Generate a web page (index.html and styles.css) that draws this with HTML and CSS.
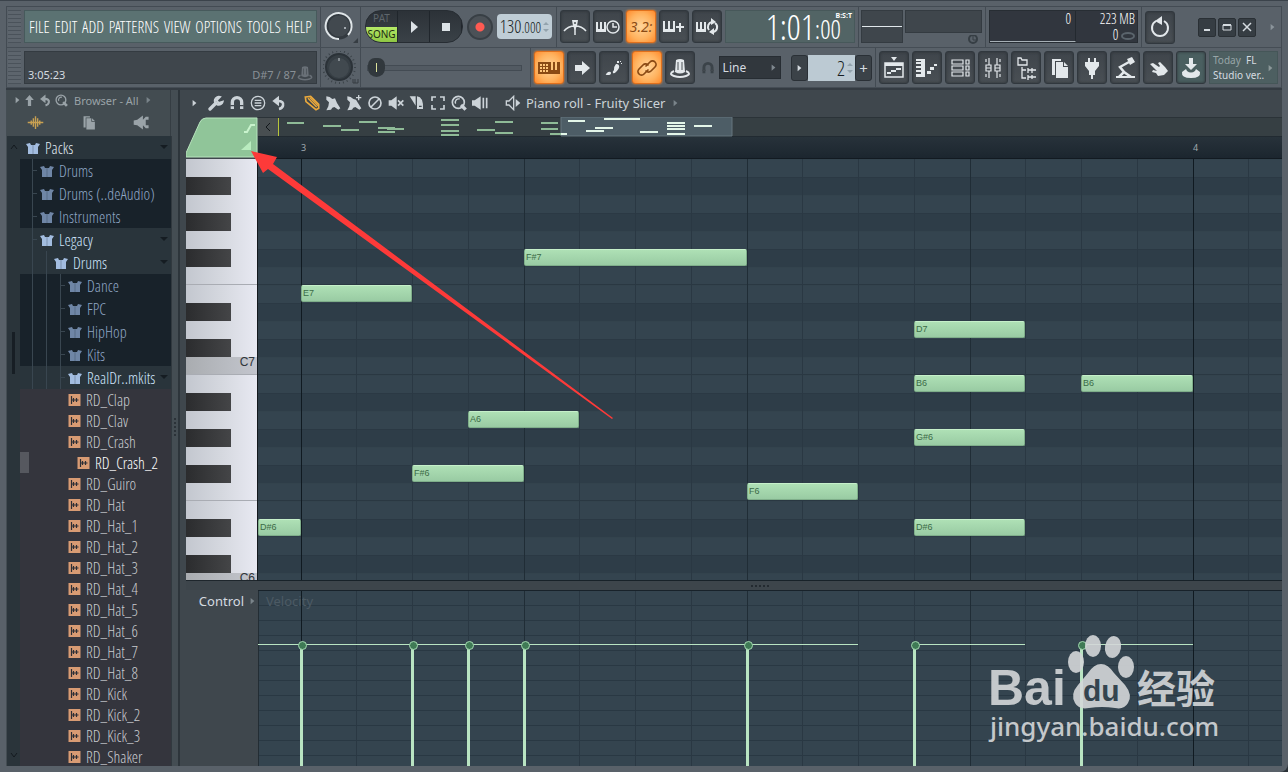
FILE: index.html
```html
<!DOCTYPE html>
<html lang="en">
<head>
  <meta charset="UTF-8" />
  <title>Piano roll - Fruity Slicer</title>
  <link rel="stylesheet" href="styles.css">
</head>
<body>

<!-- Icons -->
<svg class="sprite" aria-hidden="true">
  <symbol id="i-right" viewBox="0 0 8 10"><path d="M1 0l6 5-6 5z" fill="currentColor"/></symbol>
  <symbol id="i-play" viewBox="0 0 24 24"><path d="M9 6l7 6-7 6z" fill="currentColor"/></symbol>
  <symbol id="i-stop" viewBox="0 0 24 24"><path d="M8 8h8v8H8z" fill="currentColor"/></symbol>
  <symbol id="i-metro" viewBox="0 0 24 24"><path d="M1 16q4-5 11-5t11 5M12 10v10" fill="none" stroke="currentColor" stroke-width="1.500"/><path d="M9 5h6l-1 6-2 4-2-4z" fill="currentColor"/><circle cx="12" cy="8" r="1" fill="#4a5055"/></symbol>
  <symbol id="i-wait" viewBox="0 0 24 24"><path d="M0 7h2v7h2V7h2v7h2V7h2v10H0z" fill="currentColor"/><circle cx="17" cy="12" r="6" fill="none" stroke="currentColor" stroke-width="1.500"/><path d="M17 8v4h4" fill="none" stroke="currentColor" stroke-width="1.500"/></symbol>
  <symbol id="i-keysplus" viewBox="0 0 24 24"><path d="M1 6h2v8h3V6h2v8h3V6h2v11H1zM17 8h2v3h3v2h-3v4h-2v-4h-3v-2h3z" fill="currentColor"/></symbol>
  <symbol id="i-keysloop" viewBox="0 0 24 24"><path d="M1 7h2v7h2V7h2v7h2V7h2v10H1z" fill="currentColor"/><path d="M14 15a5 5 0 0 1 3-8M20 8a5 5 0 0 1-2 9" fill="none" stroke="currentColor" stroke-width="2"/><path d="M16 3l5 4-5 3zM19 20l-5-3 5-4z" fill="currentColor"/></symbol>
  <symbol id="i-gridkeys" viewBox="0 0 24 24"><path d="M1 6h22v12H1z" fill="currentColor"/><path d="M3 8h2v2H3zM6 8h2v2H6zM9 8h2v2H9zM3 11h2v2H3zM6 11h2v2H6zM9 11h2v2H9zM3 14h2v2H3zM6 14h2v2H6zM9 14h2v2H9zM14 6h2v8h-2zM18 6h2v8h-2z" fill="#ffc67a"/></symbol>
  <symbol id="i-arrow" viewBox="0 0 24 24"><path d="M5 9h7V5l8 7-8 7v-4H5z" fill="currentColor"/></symbol>
  <symbol id="i-foot" viewBox="0 0 24 24"><path d="M14 8q4 0 3 4-1 2-3 4-2 2-3 1-1-1 1-3 0-4 2-6zM6 16q3-1 3 1t-3 2q-3 0-2-1zM15 5h2v2h-2zM18 5h1v1h-1zM19 7h1v1h-1z" fill="currentColor"/></symbol>
  <symbol id="i-link" viewBox="0 0 24 24"><g fill="none" stroke="currentColor" stroke-width="1.700" stroke-linecap="round"><path d="M11 10l4-4a3.500 3.500 0 0 1 5 5l-4 4a3.500 3.500 0 0 1-5 0"/><path d="M13 14l-4 4a3.500 3.500 0 0 1-5-5l4-4a3.500 3.500 0 0 1 5 0"/></g></symbol>
  <symbol id="i-hat" viewBox="0 0 24 24"><path d="M8 4q4-2 8 0l1 12q-5 3-10 0z" fill="currentColor"/><path d="M10 6v8M14 6v8" stroke="#4a5055" stroke-width="1"/><path d="M6 15q-6 3 0 5 6 2 12 0 6-2 0-5" fill="none" stroke="currentColor" stroke-width="2"/></symbol>
  <symbol id="i-magnet" viewBox="0 0 24 24"><path d="M5 21V11a7 7 0 0 1 14 0v10" fill="none" stroke="currentColor" stroke-width="5"/><path d="M2 16h6M16 16h6" stroke="#42494f" stroke-width="2"/></symbol>
  <symbol id="i-playlist" viewBox="0 0 24 24"><path d="M9 1h6l-3 4z" fill="currentColor"/><path d="M3 7h18v14H3z" fill="none" stroke="currentColor" stroke-width="1.500"/><path d="M3 7h18v3H3zM5 16h4v2H5zM9 14h5v2H9zM14 12h5v2h-5z" fill="currentColor"/></symbol>
  <symbol id="i-roll" viewBox="0 0 24 24"><path d="M1 3h9v18H1v-3h5v-2H1v-2h5v-2H1v-2h5V8H1V6h5V5H1zM12 15h4v3h-4zM15 11h4v3h-4zM19 8h3v2h-3z" fill="currentColor"/></symbol>
  <symbol id="i-rack" viewBox="0 0 24 24"><path d="M4 4h11v4H4zM4 10h11v4H4zM4 16h11v4H4zM18 4h3v4h-3zM18 10h3v4h-3zM18 16h3v4h-3z" fill="none" stroke="currentColor" stroke-width="1.200"/></symbol>
  <symbol id="i-mixer" viewBox="0 0 24 24"><path d="M8 2v7M8 15v7M16 2v7M16 15v7M5 9h5v6H5zM14 9h5v6h-5zM5 12h5M14 12h5M5 3v3M19 3v3M5 18v3M19 18v3" fill="none" stroke="currentColor" stroke-width="1.200"/></symbol>
  <symbol id="i-browser" viewBox="0 0 24 24"><path d="M4 2h3l1 2h5v5H4zM8 11v11h4M8 14h4M14 12v5M14 19v5M14 14h8M14 21h8M18 12v5M18 19v4" fill="none" stroke="currentColor" stroke-width="1.300"/></symbol>
  <symbol id="i-copy" viewBox="0 0 24 24"><path d="M5 3h9v2H8v14H5zM9 6h7v5h5v11H9zM17 6l4 4h-4z" fill="currentColor"/></symbol>
  <symbol id="i-plug" viewBox="0 0 24 24"><path d="M8 2h2v4h4V2h2v4h3v4l-4 5v4h-2v4h-2v-4H9v-4l-4-5V6h3z" fill="currentColor"/></symbol>
  <symbol id="i-lamp" viewBox="0 0 24 24"><path d="M14 3l5-2 3 5-5 3zM3 20h19v2H3z" fill="currentColor"/><path d="M16 6L7 11l4 5-5 5M11 16l7 5" fill="none" stroke="currentColor" stroke-width="2.500"/></symbol>
  <symbol id="i-hand" viewBox="0 0 24 24"><path d="M4 8l3-1 6 4 1-1-2-3 2-1 5 5 3 4-4 4-6 1-2-3-4-1 1-2 4 1z" fill="currentColor"/></symbol>
  <symbol id="i-down" viewBox="0 0 24 24"><path d="M10 2h4v6h4l-6 6-6-6h4zM3 16l4-3 1 2q4 3 8 0l1-2 4 3q1 6-9 6t-9-6z" fill="currentColor"/></symbol>
  <symbol id="i-reset" viewBox="0 0 24 24"><path d="M16 6a8 8 0 1 1-8 0" fill="none" stroke="currentColor" stroke-width="2"/><path d="M7 6l7-5v9z" fill="currentColor"/></symbol>
  <symbol id="i-up" viewBox="0 0 24 24"><path d="M12 2l8 9h-5v11H9V11H4z" fill="currentColor"/></symbol>
  <symbol id="i-undo" viewBox="0 0 24 24"><path d="M10 9q10 0 8 7-1 4-6 5" fill="none" stroke="currentColor" stroke-width="4"/><path d="M2 9l10-8v16z" fill="currentColor"/></symbol>
  <symbol id="i-search" viewBox="0 0 24 24"><circle cx="11" cy="11" r="9" fill="none" stroke="currentColor" stroke-width="2.500"/><path d="M7 13a5 5 0 0 1 6-7" fill="none" stroke="currentColor" stroke-width="2"/><path d="M15 15l7 7" stroke="currentColor" stroke-width="5"/></symbol>
  <symbol id="i-wave" viewBox="0 0 24 24"><path d="M1 12h22M6 9v6M9 6v12M12 3v18M15 6v12M18 9v6" fill="none" stroke="currentColor" stroke-width="2"/></symbol>
  <symbol id="i-horn" viewBox="0 0 24 24"><path d="M1 9l5-1 8-6v20l-8-6-5-1zM14 8l4-4h4v4h-4v8h4v4h-4l-4-4z" fill="currentColor"/></symbol>
  <symbol id="i-box" viewBox="0 0 14 12"><path d="M0 2l4-1 1 2h4l1-2 4 1-2 3v7H2V5z" fill="currentColor"/><path d="M7 3v9" stroke="#26313a" stroke-opacity=".3"/></symbol>
  <symbol id="i-sample" viewBox="0 0 12 12"><path d="M0 0h12v12H0z" fill="#d89b73"/><path d="M3 2v8M3 6h7M5 4v4M8 4v4" stroke="#2d2f36" stroke-width="1.200"/></symbol>
  <symbol id="i-wrench" viewBox="0 0 24 24"><path d="M3 21l9-9" stroke="currentColor" stroke-width="5" stroke-linecap="round"/><path d="M18 3a6 6 0 1 0 4 7l-6 2-3-4z" fill="none" stroke="currentColor" stroke-width="3"/></symbol>
  <symbol id="i-menu" viewBox="0 0 24 24"><circle cx="12" cy="12" r="10" fill="none" stroke="currentColor" stroke-width="2"/><path d="M7 8h10M7 12h10M7 16h10" stroke="currentColor" stroke-width="2"/></symbol>
  <symbol id="i-pencil" viewBox="0 0 24 24"><path d="M2 3l8-1 12 12v6l-4 2L3 10z" fill="none" stroke="currentColor" stroke-width="2.500"/><path d="M6 5l13 13M9 4l12 12" stroke="currentColor" stroke-width="2"/></symbol>
  <symbol id="i-brush" viewBox="0 0 24 24"><path d="M2 2l5 1 4 3 4-1 3 7 5 8-3 2-6-4-3 1-2 3-7 1 3-6 1-6-4-4z" fill="currentColor"/></symbol>
  <symbol id="i-brushplus" viewBox="0 0 24 24"><path d="M2 2l5 1 4 3 4 1 3 5 5 8-3 2-6-4-3 1-2 3-7 1 3-6 1-6-4-4zM18 0h2v3h3v2h-3v3h-2V5h-3V3h3z" fill="currentColor"/></symbol>
  <symbol id="i-slash" viewBox="0 0 24 24"><circle cx="12" cy="12" r="9" fill="none" stroke="currentColor" stroke-width="2.500"/><path d="M6 18L18 6" stroke="currentColor" stroke-width="2.500"/></symbol>
  <symbol id="i-mute" viewBox="0 0 24 24"><path d="M1 8h4l8-6v20l-8-6H1z" fill="currentColor"/><path d="M15 8l8 8M23 8l-8 8" stroke="currentColor" stroke-width="2.500"/></symbol>
  <symbol id="i-slice" viewBox="0 0 24 24"><path d="M1 2h9v14zM12 2q10 1 9 19h-9z" fill="currentColor"/><path d="M15 17h4" stroke="#3f474d" stroke-width="2"/></symbol>
  <symbol id="i-select" viewBox="0 0 24 24"><path d="M3 9V3h6M15 3h6v6M21 15v6h-6M9 21H3v-6" fill="none" stroke="currentColor" stroke-width="2.500"/></symbol>
  <symbol id="i-playback" viewBox="0 0 24 24"><path d="M0 8h4l9-6v20l-9-6H0z" fill="currentColor"/><path d="M17 4v16M22 4v16" stroke="currentColor" stroke-width="2.500"/></symbol>
  <symbol id="i-speaker" viewBox="0 0 24 24"><path d="M2 9h4l7-7v20l-7-7H2z" fill="none" stroke="currentColor" stroke-width="2"/><path d="M16 6l7 6-7 6z" fill="currentColor"/></symbol>
  <symbol id="i-spin" viewBox="0 0 6 12"><path d="M0 4l3-3 3 3zM0 8l3 3 3-3z" fill="currentColor"/></symbol>
</svg>

<div class="window">

  <!-- Toolbars -->
  <header class="toolbar">
    <div class="bar">
      <div class="group group-menu">
        <span class="grip"></span>
        <nav class="menu">
          <a href="#">FILE</a>
          <a href="#">EDIT</a>
          <a href="#">ADD</a>
          <a href="#">PATTERNS</a>
          <a href="#">VIEW</a>
          <a href="#">OPTIONS</a>
          <a href="#">TOOLS</a>
          <a href="#">HELP</a>
        </nav>
      </div>
      <div class="group group-knob">
        <button class="knob" aria-label="Main volume">
          <svg viewBox="0 0 36 33"><circle cx="16" cy="16" r="12" fill="#42494f" stroke="#333a40" stroke-width="3"/><path d="M16 29a13 13 0 1 1 9-4" fill="none" stroke="#dfe5e8" stroke-width="2"/><circle cx="22" cy="18" r="1" fill="#c4cbd0"/><path d="M35 28v5h-5z" fill="#363d43"/></svg>
        </button>
      </div>
      <div class="group group-transport">
        <div class="transport">
          <button class="patsong"><span class="pat">PAT</span><span class="song">SONG</span></button>
          <button aria-label="Play"><svg class="icon"><use href="#i-play"/></svg></button>
          <button aria-label="Stop"><svg class="icon"><use href="#i-stop"/></svg></button>
        </div>
        <button class="record" aria-label="Record"></button>
        <div class="tempo"><span>130</span><small>.000</small><svg class="spin"><use href="#i-spin"/></svg></div>
      </div>
      <div class="group group-rec">
        <button class="tool" aria-label="Metronome"><svg class="icon"><use href="#i-metro"/></svg></button>
        <button class="tool" aria-label="Wait for input"><svg class="icon"><use href="#i-wait"/></svg></button>
        <button class="tool on digits">3.2:</button>
        <button class="tool" aria-label="Overdub"><svg class="icon"><use href="#i-keysplus"/></svg></button>
        <button class="tool" aria-label="Loop record"><svg class="icon"><use href="#i-keysloop"/></svg></button>
        <div class="clock"><span class="big">1:01</span><span class="small">:00</span><span class="unit">B:S:T</span></div>
      </div>
      <div class="group group-scope">
        <div class="scope"></div>
        <div class="peaks"></div>
        <svg class="scope-eye" viewBox="0 0 11 9"><circle cx="5" cy="4" r="4" fill="none" stroke="#363e44" stroke-width="2"/><path d="M5 1v4h3" stroke="#363e44" fill="none"/></svg>
      </div>
      <div class="group group-cpu">
        <div class="cpu">
          <div class="cpu-load"><span>0</span></div>
          <div class="cpu-mem"><span>223 MB</span><span>0 <svg viewBox="0 0 14 8"><ellipse cx="7" cy="4" rx="6" ry="3" fill="none" stroke="#5a646c" stroke-width="2"/></svg></span></div>
        </div>
      </div>
      <div class="group group-window">
        <button class="tool" aria-label="Undo"><svg class="icon"><use href="#i-reset"/></svg></button>
        <div class="winbtns">
          <button aria-label="Minimize"><svg viewBox="0 0 12 12"><path d="M3 9h6" stroke="currentColor" stroke-width="2"/></svg></button>
          <button aria-label="Maximize"><svg viewBox="0 0 12 12"><path d="M2 4h8v5H2z" fill="none" stroke="currentColor"/><path d="M2 3h8v2H2z" fill="currentColor"/></svg></button>
          <button aria-label="Close"><svg viewBox="0 0 12 12"><path d="M2 2l8 8M10 2l-8 8" stroke="currentColor" stroke-width="1.500"/></svg></button>
        </div>
        <svg class="more"><use href="#i-right"/></svg>
      </div>
    </div>

    <div class="bar bar-low">
      <div class="group group-menu">
        <span class="grip"></span>
        <div class="hint"><span>3:05:23</span><span class="hint-note">D#7 / 87</span><svg class="hint-icon"><use href="#i-hat"/></svg></div>
      </div>
      <div class="group group-knob">
        <button class="knob" aria-label="Main pitch">
          <svg viewBox="0 0 36 33"><circle cx="16" cy="16" r="16" fill="none" stroke="#3c444a" stroke-width="2" stroke-dasharray="1 3"/><circle cx="16" cy="16" r="13" fill="#363e44" stroke="#2b3238" stroke-width="2"/><circle cx="16" cy="17" r="10" fill="#41494f"/><path d="M16 7v3" stroke="#c4cbd0"/><path d="M30 28v4h5v-4M32 28v4" fill="none" stroke="#363d43"/></svg>
        </button>
      </div>
      <div class="group group-slider">
        <input class="pitch-range" type="range" min="0" max="100" value="0" aria-label="Pattern position">
      </div>
      <div class="group group-snap">
        <button class="tool on" aria-label="Typing keyboard"><svg class="icon"><use href="#i-gridkeys"/></svg></button>
        <button class="tool" aria-label="Song position"><svg class="icon"><use href="#i-arrow"/></svg></button>
        <button class="tool" aria-label="Step edit"><svg class="icon"><use href="#i-foot"/></svg></button>
        <button class="tool on" aria-label="Link"><svg class="icon"><use href="#i-link"/></svg></button>
        <button class="tool" aria-label="Multilink"><svg class="icon"><use href="#i-hat"/></svg></button>
        <svg class="snap-icon"><use href="#i-magnet"/></svg>
        <div class="snap">
          <select aria-label="Snap"><option>Line</option></select>
          <svg><use href="#i-right"/></svg>
        </div>
        <div class="pattern">
          <button aria-label="Pattern menu"><svg><use href="#i-right"/></svg></button>
          <input type="text" value="2" aria-label="Pattern">
          <svg class="spin"><use href="#i-spin"/></svg>
          <button>+</button>
        </div>
      </div>
      <div class="group group-tools">
        <button class="tool" aria-label="Playlist"><svg class="icon"><use href="#i-playlist"/></svg></button>
        <button class="tool" aria-label="Piano roll"><svg class="icon"><use href="#i-roll"/></svg></button>
        <button class="tool" aria-label="Channel rack"><svg class="icon"><use href="#i-rack"/></svg></button>
        <button class="tool" aria-label="Mixer"><svg class="icon"><use href="#i-mixer"/></svg></button>
        <button class="tool" aria-label="Browser"><svg class="icon"><use href="#i-browser"/></svg></button>
        <button class="tool" aria-label="Project picker"><svg class="icon"><use href="#i-copy"/></svg></button>
        <button class="tool" aria-label="Plugins"><svg class="icon"><use href="#i-plug"/></svg></button>
        <button class="tool" aria-label="Tempo tapper"><svg class="icon"><use href="#i-lamp"/></svg></button>
        <button class="tool" aria-label="Touch"><svg class="icon"><use href="#i-hand"/></svg></button>
        <button class="tool teal" aria-label="Download"><svg class="icon"><use href="#i-down"/></svg></button>
        <a class="news" href="#">
          <span><i>Today</i> &nbsp;FL<br>Studio ver..</span>
          <svg><use href="#i-right"/></svg>
        </a>
      </div>
    </div>
  </header>

  <main class="workspace">

    <!-- Browser -->
    <aside class="sidebar">
      <div class="side-head">
        <div class="side-title">
          <svg class="tiny"><use href="#i-right"/></svg>
          <svg class="mini"><use href="#i-up"/></svg>
          <svg class="mini"><use href="#i-undo"/></svg>
          <svg class="mini"><use href="#i-search"/></svg>
          <span>Browser - All</span>
          <svg class="tiny dim"><use href="#i-right"/></svg>
        </div>
        <div class="side-tabs">
          <button class="gold" aria-label="Samples"><svg><use href="#i-wave"/></svg></button>
          <button aria-label="Files"><svg><use href="#i-copy"/></svg></button>
          <button aria-label="Plugins"><svg><use href="#i-horn"/></svg></button>
        </div>
      </div>
      <div class="side-body">
        <div class="scroll">
          <svg viewBox="0 0 8 6"><path d="M1 5l3-4 3 4" fill="none" stroke="currentColor"/></svg>
          <span class="thumb"></span>
          <svg viewBox="0 0 8 6"><path d="M1 1l3 4 3-4" fill="none" stroke="currentColor"/></svg>
        </div>
        <ul class="tree">
          <li class="open l0"><a href="#"><svg><use href="#i-box"/></svg>Packs</a></li>
          <li class="l1"><a href="#"><svg><use href="#i-box"/></svg>Drums</a></li>
          <li class="l1"><a href="#"><svg><use href="#i-box"/></svg>Drums (..deAudio)</a></li>
          <li class="l1"><a href="#"><svg><use href="#i-box"/></svg>Instruments</a></li>
          <li class="open l1"><a href="#"><svg><use href="#i-box"/></svg>Legacy</a></li>
          <li class="open l2"><a href="#"><svg><use href="#i-box"/></svg>Drums</a></li>
          <li class="l3"><a href="#"><svg><use href="#i-box"/></svg>Dance</a></li>
          <li class="l3"><a href="#"><svg><use href="#i-box"/></svg>FPC</a></li>
          <li class="l3"><a href="#"><svg><use href="#i-box"/></svg>HipHop</a></li>
          <li class="l3"><a href="#"><svg><use href="#i-box"/></svg>Kits</a></li>
          <li class="open l3"><a href="#"><svg><use href="#i-box"/></svg>RealDr..mkits</a></li>
          <li class="file"><a href="#"><svg><use href="#i-sample"/></svg>RD_Clap</a></li>
          <li class="file"><a href="#"><svg><use href="#i-sample"/></svg>RD_Clav</a></li>
          <li class="file"><a href="#"><svg><use href="#i-sample"/></svg>RD_Crash</a></li>
          <li class="file selected"><a href="#"><svg><use href="#i-sample"/></svg>RD_Crash_2</a></li>
          <li class="file"><a href="#"><svg><use href="#i-sample"/></svg>RD_Guiro</a></li>
          <li class="file"><a href="#"><svg><use href="#i-sample"/></svg>RD_Hat</a></li>
          <li class="file"><a href="#"><svg><use href="#i-sample"/></svg>RD_Hat_1</a></li>
          <li class="file"><a href="#"><svg><use href="#i-sample"/></svg>RD_Hat_2</a></li>
          <li class="file"><a href="#"><svg><use href="#i-sample"/></svg>RD_Hat_3</a></li>
          <li class="file"><a href="#"><svg><use href="#i-sample"/></svg>RD_Hat_4</a></li>
          <li class="file"><a href="#"><svg><use href="#i-sample"/></svg>RD_Hat_5</a></li>
          <li class="file"><a href="#"><svg><use href="#i-sample"/></svg>RD_Hat_6</a></li>
          <li class="file"><a href="#"><svg><use href="#i-sample"/></svg>RD_Hat_7</a></li>
          <li class="file"><a href="#"><svg><use href="#i-sample"/></svg>RD_Hat_8</a></li>
          <li class="file"><a href="#"><svg><use href="#i-sample"/></svg>RD_Kick</a></li>
          <li class="file"><a href="#"><svg><use href="#i-sample"/></svg>RD_Kick_2</a></li>
          <li class="file"><a href="#"><svg><use href="#i-sample"/></svg>RD_Kick_3</a></li>
          <li class="file"><a href="#"><svg><use href="#i-sample"/></svg>RD_Shaker</a></li>
        </ul>
        <div class="gutter"><span></span></div>
      </div>
    </aside>

    <!-- Piano roll -->
    <section class="roll">
      <div class="roll-head">
        <button aria-label="Options"><svg class="tiny"><use href="#i-right"/></svg></button>
        <button aria-label="Tools"><svg><use href="#i-wrench"/></svg></button>
        <button aria-label="Snap"><svg><use href="#i-magnet"/></svg></button>
        <button aria-label="Stamp"><svg><use href="#i-menu"/></svg></button>
        <button aria-label="Undo"><svg><use href="#i-undo"/></svg></button>
        <button class="gold first" aria-label="Draw"><svg><use href="#i-pencil"/></svg></button>
        <button aria-label="Paint"><svg><use href="#i-brush"/></svg></button>
        <button aria-label="Paint sequence"><svg><use href="#i-brushplus"/></svg></button>
        <button aria-label="Delete"><svg><use href="#i-slash"/></svg></button>
        <button aria-label="Mute"><svg><use href="#i-mute"/></svg></button>
        <button aria-label="Slice"><svg><use href="#i-slice"/></svg></button>
        <button aria-label="Select"><svg><use href="#i-select"/></svg></button>
        <button aria-label="Zoom"><svg><use href="#i-search"/></svg></button>
        <button aria-label="Playback"><svg><use href="#i-playback"/></svg></button>
        <button class="first" aria-label="Preview"><svg><use href="#i-speaker"/></svg></button>
        <h1>Piano roll - Fruity Slicer</h1>
        <svg class="tiny dim"><use href="#i-right"/></svg>
      </div>

      <div class="roll-body">
        <svg class="corner" viewBox="0 0 72 41">
          <path d="M0 40V36L14 5q2-4 6-4h51v39z" fill="#90c599" stroke="#b7e4bd"/>
          <path d="M58 15h3l4-7h4" fill="none" stroke="#c9f3cd" stroke-width="2"/>
          <path d="M65 24v9H55z" fill="#b9ecbf"/>
        </svg>
        <div class="top">
          <div class="overview">
            <button class="back" aria-label="Back"><svg viewBox="0 0 8 10"><path d="M6 1L2 5l4 4" fill="none" stroke="currentColor"/></svg></button>
            <svg class="map" viewBox="0 0 454 20">
              <path fill="#4d5d66" stroke="#66777f" d="M282 0h171v19H282z"/>
              <path stroke="#8fbb97" stroke-width="2" d="M8 6h17M44 9h18M62 13h18M80 5h18M99 11h17M99 15h17M108 12h17M162 3h18M162 8h18M162 14h18M162 18h18M198 13h18M216 5h18M216 16h18M262 6h17M262 12h17M271 17h11"/>
              <path stroke="#e4f6e9" stroke-width="2" d="M282 17h6M289 4h17M307 14h18M316 11h18M325 2h36M361 15h18M388 6h18M388 9h18M388 12h18M388 17h18M415 9h18"/>
            </svg>
          </div>
          <div class="ruler" id="ruler"></div>
        </div>
        <div class="keys" id="keys"></div>
        <div class="grid" id="grid"></div>
        <div class="splitter"><span></span></div>
        <div class="control-label">Control <svg class="tiny dim"><use href="#i-right"/></svg></div>
        <div class="velocity" id="velocity"><span class="ghost">Velocity</span></div>
      </div>

      <svg class="pointer" viewBox="0 0 370 270"><path d="M0 0l26 6-4 7 340 254-1 1L17 18l-5 4z" fill="#fd3a39"/></svg>
    </section>
  </main>

  <svg class="watermark" viewBox="0 0 240 110">
    <g fill="#d4d7d9" opacity=".9">
      <text class="wm-bai" x="0" y="70">Bai</text>
      <ellipse cx="88" cy="27" rx="8" ry="11"/>
      <ellipse cx="105" cy="11" rx="8" ry="11"/>
      <ellipse cx="125" cy="12" rx="8" ry="11" transform="rotate(10 125 12)"/>
      <ellipse cx="138" cy="32" rx="8" ry="11"/>
      <path d="M113 29q7 0 13 9l11 12q8 10 3 18-4 7-13 5-13-2-26 0-10 2-14-5-5-9 3-18l10-12q6-9 13-9z"/>
      <text class="wm-cn" x="149" y="68">经验</text>
      <text class="wm-url" x="2" y="101">jingyan.baidu.com</text>
    </g>
    <text class="wm-du" x="95" y="66">du</text>
  </svg>
</div>

<script src="script.js"></script>
</body>
</html>
```
FILE: styles.css
```css
* {
  box-sizing: border-box;
}
:root {
  --narrow: "Open Sans Condensed Light", "Open Sans Condensed", "Noto Sans", sans-serif;
  --ui: "Noto Sans", "Open Sans", sans-serif;
}
body {
  margin: 0;
  background: #2b3238;
  color: #d5dbe0;
  font-family: var(--ui);
  font-size: 12px;
}
button, input, select {
  margin: 0;
  padding: 0;
  border: none;
  background: none;
  color: inherit;
  font: inherit;
}
a {
  color: inherit;
  text-decoration: none;
}
svg {
  display: block;
  flex: none;
}
.sprite {
  display: none;
}
.window {
  position: relative;
  display: flex;
  flex-direction: column;
  height: 100vh;
  padding: 5px 6px 6px;
  background: #596169;
  border-top: 1px solid #3b434b;
  border-radius: 0 0 8px 0;
  overflow: hidden;
}

/* Toolbars */
.toolbar {
  border: 1px solid #434b53;
  border-bottom: none;
}
.bar {
  display: flex;
  height: 41px;
  border-bottom: 1px solid #454d55;
}
.bar-low {
  height: 40px;
}
.group {
  display: flex;
  align-items: flex-start;
  gap: 3px;
  padding: 3px 3px 0;
  border-right: 1px solid #434b53;
}
.group-menu {
  width: 314px;
  padding-left: 1px;
}
.grip {
  width: 13px;
  height: 33px;
  background: repeating-linear-gradient(#4a525a 0 1px, #5d656d 1px 4px);
}
.menu {
  flex: 1;
  display: flex;
  align-items: center;
  justify-content: space-between;
  height: 33px;
  padding: 0 4px;
  background: #5b7272;
  border: 1px solid #475a5c;
  color: #fff;
  font-family: var(--narrow);
  font-size: 16px;
}
.hint {
  flex: 1;
  display: flex;
  align-items: flex-end;
  height: 33px;
  padding: 0 2px 1px 3px;
  background: #3f464c;
  border: 1px solid #343b41;
  font-size: 11px;
}
.hint-note {
  margin-left: auto;
  color: #899096;
}
.hint-icon {
  width: 18px;
  height: 18px;
  color: #697077;
}
.group-knob {
  width: 40px;
  padding: 3px 0 0 2px;
}
.knob svg {
  width: 36px;
  height: 33px;
}
.group-transport {
  width: 196px;
  gap: 4px;
  padding-left: 4px;
}
.transport {
  display: flex;
  width: 98px;
  height: 33px;
  background: linear-gradient(#2c3238, #3a4147);
  border: 1px solid #272d33;
  border-radius: 16px;
  overflow: hidden;
}
.transport button {
  flex: 1;
  display: flex;
  align-items: center;
  justify-content: center;
  border-right: 1px solid #20262c;
  color: #dce2e6;
}
.transport .patsong {
  flex-direction: column;
  align-items: stretch;
  font-size: 10px;
  line-height: 15px;
}
.pat {
  flex: 1;
  color: #5e666c;
}
.song {
  flex: 1;
  background: linear-gradient(#b5ea66, #8fc744);
  color: #1c2a12;
}
.record {
  width: 26px;
  height: 26px;
  margin-top: 4px;
  border: 2px solid #383f45;
  border-radius: 50%;
  background: radial-gradient(#ff5a52 0 4px, #4b5157 5px);
}
.tempo {
  display: flex;
  align-items: baseline;
  justify-content: center;
  width: 55px;
  height: 25px;
  margin-top: 4px;
  background: #bfcdd6;
  border-radius: 4px;
  color: #161d22;
  font-family: var(--narrow);
  font-size: 18px;
  line-height: 25px;
}
.tempo small {
  font-size: 14px;
}
.spin {
  align-self: center;
  width: 6px;
  height: 12px;
  margin-left: 2px;
  color: #93a3ad;
}
.tool {
  display: flex;
  align-items: center;
  justify-content: center;
  width: 30px;
  height: 33px;
  background: linear-gradient(#3f454b, #494f54);
  border: 1px solid #31383e;
  border-radius: 3px;
  box-shadow: inset 0 0 3px #2c3237;
  color: #e3e8eb;
}
.icon {
  width: 24px;
  height: 24px;
}
.tool.on {
  background: radial-gradient(#ffd59b, #ffb25e 60%, #ff8a2c);
  border-color: #e0701c;
  box-shadow: 0 0 2px #ff8a2c;
  color: #8a4a14;
}
.tool.teal {
  background: #4a5f60;
}
.digits {
  font-size: 14px;
  font-style: italic;
}
.group-rec {
  width: 302px;
}
.clock {
  flex: 1;
  display: flex;
  justify-content: flex-end;
  position: relative;
  height: 33px;
  padding-right: 13px;
  background: #526465;
  border: 1px solid #47585a;
  color: #fff;
  font-family: var(--narrow);
  line-height: 31px;
}
.big {
  font-size: 35px;
}
.small {
  font-size: 26px;
  line-height: 36px;
}
.unit {
  position: absolute;
  top: 0;
  right: 2px;
  font: bold 7px/10px var(--ui);
}
.group-scope {
  position: relative;
  width: 127px;
  gap: 2px;
  padding-left: 2px;
}
.scope {
  width: 42px;
  height: 33px;
  background: linear-gradient(#e1e8ec, #e1e8ec) 0 15px / 100% 1px no-repeat #3f464c;
  border: 1px solid #343b41;
}
.peaks {
  width: 78px;
  height: 23px;
  background: #3f464c;
  border: 1px solid #343b41;
}
.scope-eye {
  position: absolute;
  right: 6px;
  bottom: 3px;
  width: 11px;
  height: 9px;
}
.group-cpu {
  width: 156px;
}
.cpu {
  flex: 1;
  display: flex;
  height: 33px;
  background: #31363e;
  border: 1px solid #272d33;
  color: #fff;
  font-family: var(--narrow);
  font-size: 14px;
  line-height: 15px;
  text-align: right;
}
.cpu-load {
  width: 86px;
  padding-right: 4px;
  border-right: 1px solid #23292f;
  border-bottom: 1px solid #a7b0b6;
}
.cpu-mem {
  flex: 1;
  display: flex;
  flex-direction: column;
  gap: 1px;
  padding-right: 2px;
}
.cpu-mem svg {
  display: inline;
  width: 14px;
  height: 8px;
}
.group-window {
  flex: 1;
  align-items: center;
  padding-right: 6px;
  border-right: none;
  padding-bottom: 3px;
}
.winbtns {
  display: flex;
  gap: 2px;
  margin-left: auto;
  margin-right: 11px;
}
.winbtns button {
  width: 18px;
  height: 19px;
  padding: 2px;
  background: #363d43;
  border: 1px solid #2a3035;
  border-radius: 2px;
}
.more {
  width: 5px;
  height: 8px;
  color: #8b949b;
}
.group-slider {
  width: 170px;
  padding: 3px 8px 0 6px;
}
.pitch-range {
  appearance: none;
  width: 100%;
  height: 33px;
}
.pitch-range::-webkit-slider-runnable-track {
  height: 6px;
  background: #525a62;
  border: 1px solid #434b53;
}
.pitch-range::-webkit-slider-thumb {
  appearance: none;
  width: 17px;
  height: 19px;
  margin-top: -8px;
  border-radius: 8px 8px 10px 10px;
  background: linear-gradient(90deg, transparent 8px, #dce29a 8px 9px, transparent 9px) 0 5px / 100% 9px no-repeat #31383d;
}
.group-snap {
  width: 345px;
}
.snap-icon {
  width: 14px;
  height: 16px;
  margin: 9px 1px 0 3px;
  color: #3b4349;
}
.snap {
  position: relative;
  width: 63px;
  height: 23px;
  margin-top: 5px;
  background: #31373d;
  border: 1px solid #272d33;
  font-size: 12px;
}
.snap select {
  appearance: none;
  width: 100%;
  height: 21px;
  padding-left: 3px;
}
.snap svg {
  position: absolute;
  top: 7px;
  right: 4px;
  width: 5px;
  height: 7px;
  color: #7f888f;
}
.pattern {
  display: flex;
  position: relative;
  width: 81px;
  height: 26px;
  margin: 4px 0 0 7px;
}
.pattern button {
  display: flex;
  align-items: center;
  justify-content: center;
  width: 17px;
  background: #3b4248;
  border: 1px solid #2a3036;
  border-radius: 3px;
  font-size: 15px;
}
.pattern button svg {
  width: 5px;
  height: 8px;
}
.pattern input {
  width: 47px;
  padding-right: 10px;
  background: #bccad3;
  color: #161d22;
  font-family: var(--narrow);
  font-size: 20px;
  text-align: right;
}
.pattern .spin {
  position: absolute;
  top: 7px;
  right: 19px;
}
.group-tools {
  flex: 1;
  border-right: none;
}
.news {
  flex: 1;
  display: flex;
  align-items: center;
  justify-content: space-between;
  height: 33px;
  padding: 0 4px 0 3px;
  background: #4d5f61;
  border: 1px solid #455658;
  font-size: 10px;
  line-height: 15px;
  white-space: nowrap;
}
.news i {
  color: #98a6a8;
  font-style: normal;
}
.news svg {
  width: 5px;
  height: 8px;
  color: #8b9899;
}

/* Browser */
.workspace {
  flex: 1;
  display: flex;
  min-height: 0;
  border-top: 2px solid #343b42;
}
.sidebar {
  display: flex;
  flex-direction: column;
  width: 174px;
  padding-left: 1px;
  background: #444d53;
  border-right: 2px solid #2d353b;
}
.side-head {
  height: 46px;
  margin-right: 7px;
  background: #434c51;
  border-right: 1px solid #353d43;
  color: #9aa3a8;
}
.side-title {
  display: flex;
  align-items: center;
  gap: 3px;
  height: 20px;
  padding-left: 8px;
  font-size: 11px;
}
.side-title span {
  margin: 0 4px 0 3px;
}
.tiny {
  width: 5px;
  height: 8px;
}
.dim {
  color: #7a848a;
}
.mini {
  width: 13px;
  height: 13px;
}
.side-tabs {
  display: flex;
  justify-content: space-between;
  padding: 4px 20px 0;
}
.side-tabs svg {
  width: 17px;
  height: 17px;
}
.gold {
  color: #c8a052;
}
.side-body {
  flex: 1;
  display: flex;
  min-height: 0;
}
.scroll {
  display: flex;
  flex-direction: column;
  justify-content: space-between;
  align-items: center;
  width: 13px;
  padding: 8px 2px;
  background: #2a343a;
  color: #141a1f;
}
.scroll svg {
  width: 8px;
  height: 6px;
}
.thumb {
  width: 3px;
  height: 42px;
  margin-bottom: 196px;
  background: #171e24;
}
.tree {
  flex: 1;
  min-width: 0;
  margin: 0;
  padding: 0;
  background: #34353d;
  font-family: var(--narrow);
  font-size: 16px;
  list-style: none;
  white-space: nowrap;
  overflow: hidden;
}
.tree li {
  display: flex;
  align-items: center;
  height: 23px;
  background: #18222a;
  color: #8fa6c5;
}
.tree a {
  display: flex;
  align-items: center;
  gap: 5px;
}
.tree svg {
  width: 14px;
  height: 12px;
  color: #6f86a6;
}
.tree .open svg {
  color: #a3bde0;
}
.tree .file svg {
  width: 13px;
}
.tree .open {
  background-color: #29343b;
  color: #cfe4fb;
}
.tree .open::after {
  content: "";
  margin: 3px 3px 0 auto;
  border: 4px solid transparent;
  border-top-color: #151c22;
}
.tree .l0 {
  padding-left: 6px;
  color: #e0eaf2;
}
.tree .l1 {
  padding-left: 20px;
  background-image: linear-gradient(#394650, #394650), linear-gradient(#394650, #394650);
  background-position: 12px 0, 12px 11px;
  background-size: 1px 100%, 5px 1px;
  background-repeat: no-repeat;
}
.tree .l2 {
  padding-left: 34px;
  background-image: linear-gradient(#394650, #394650), linear-gradient(#394650, #394650);
  background-position: 12px 0, 26px 0;
  background-size: 1px 100%;
  background-repeat: no-repeat;
}
.tree .l3 {
  padding-left: 48px;
  background-image: linear-gradient(#394650, #394650), linear-gradient(#394650, #394650), linear-gradient(#394650, #394650), linear-gradient(#394650, #394650);
  background-position: 12px 0, 26px 0, 40px 0, 40px 11px;
  background-size: 1px 100%, 1px 100%, 1px 100%, 5px 1px;
  background-repeat: no-repeat;
}
.tree .file {
  height: 21px;
  padding-left: 48px;
  background: none;
  color: #c9cbcf;
}
.tree .selected {
  padding-left: 57px;
  background: linear-gradient(#56585f, #56585f) 0 0 / 9px 100% no-repeat;
  color: #fff;
}
.gutter {
  display: flex;
  align-items: center;
  width: 7px;
  padding-left: 2px;
  border-left: 1px solid #31393f;
}
.gutter span {
  width: 2px;
  height: 18px;
  margin-bottom: 48px;
  background: repeating-linear-gradient(#2b3238 0 2px, transparent 2px 4px);
}

/* Piano roll */
.roll {
  position: relative;
  flex: 1;
  display: flex;
  flex-direction: column;
  min-width: 0;
  background: #3f474d;
}
.roll-head {
  display: flex;
  align-items: center;
  height: 27px;
  padding: 0 0 2px 4px;
  color: #ccd3d8;
}
.roll-head button {
  display: flex;
  justify-content: center;
  width: 21px;
}
.roll-head button svg:not(.tiny) {
  width: 16px;
  height: 16px;
}
.roll-head .first {
  margin-left: 12px;
}
.roll-head .gold {
  color: #eaa93c;
}
.roll-head h1 {
  margin: 0 8px 0 3px;
  font-size: 13px;
  font-weight: normal;
}
.roll-body {
  flex: 1;
  display: grid;
  grid-template-columns: 72px 1fr;
  grid-template-rows: 42px 1fr 9px 176px;
  min-height: 0;
  padding-left: 6px;
}
.corner {
  width: 72px;
  height: 41px;
}
.top {
  min-width: 0;
}
.overview {
  display: flex;
  height: 20px;
  background: #363f43;
  border-bottom: 1px solid #212a31;
  border-top: 1px solid #2b3338;
}
.back {
  display: flex;
  align-items: center;
  justify-content: center;
  width: 21px;
  background: #484e51;
  border-right: 1px solid #b8c63a;
  color: #12171b;
}
.back svg {
  width: 8px;
  height: 10px;
}
.map {
  width: 454px;
  height: 20px;
  margin-top: -1px;
}
.ruler {
  position: relative;
  height: 22px;
  background: linear-gradient(#27323a, #1c262f);
  border-bottom: 1px solid #121a21;
  color: #a0aab0;
  font-size: 9px;
  line-height: 21px;
  overflow: hidden;
}
.ruler span {
  position: absolute;
}
.keys {
  border-right: 1px solid #14191d;
  border-bottom: 1px solid #1e262c;
  overflow: hidden;
}
.key {
  display: flex;
  justify-content: flex-end;
  height: 18px;
  padding-right: 2px;
  background: linear-gradient(90deg, #c3c7cf, #d5d8df 50%, #e8e9f2);
  color: #30353a;
  font: 12px/10px "Liberation Sans", sans-serif;
}
.key.edge {
  border-bottom: 1px solid #a9acb3;
}
.key.root {
  background: linear-gradient(90deg, #a9acb0, #b9bcc2 60%, #c3c5cd);
}
.key.black::before {
  content: "";
  width: 45px;
  height: 18px;
  margin-right: auto;
  background: linear-gradient(90deg, #2b2c2e, #444547);
}
.grid {
  position: relative;
  min-width: 0;
  border-bottom: 1px solid #182229;
  overflow: hidden;
}
.lane {
  height: 18px;
  background: #34444f;
  border-top: 1px solid #33434d;
}
.lane.black {
  background: #2e3d48;
  border-top-color: #2b3944;
}
.lane.edge {
  border-bottom: 1px solid #2a3842;
}
.line {
  position: absolute;
  top: 0;
  bottom: 0;
  width: 1px;
  background: #2a3843;
}
.line.beat {
  background: #202d36;
}
.line.bar-start {
  background: #101a21;
}
.note {
  position: absolute;
  height: 17px;
  padding-left: 1px;
  background: linear-gradient(#aee0b5, #99cba3);
  border: 1px solid #7fae8a;
  border-top-color: #c6f0ca;
  border-radius: 2px;
  color: #3c6b46;
  font: 9px/15px "Liberation Sans", sans-serif;
}
.splitter {
  grid-column: 1 / 3;
  display: flex;
  align-items: center;
  justify-content: center;
  background: #3d454b;
}
.splitter span {
  width: 18px;
  height: 2px;
  margin-left: 52px;
  background: repeating-linear-gradient(90deg, #232a30 0 2px, transparent 2px 4px);
}
.control-label {
  display: flex;
  justify-content: flex-end;
  align-items: center;
  gap: 6px;
  height: 22px;
  padding-right: 3px;
  font-size: 13px;
}
.velocity {
  position: relative;
  min-width: 0;
  background: repeating-linear-gradient(#34444f 0 14px, #293843 14px 15px);
  border-top: 1px solid #18222a;
  box-shadow: inset 1px 0 #232d34;
  overflow: hidden;
}
.ghost {
  position: absolute;
  left: 8px;
  top: 1px;
  color: #4c5a64;
  font-size: 13px;
}
.level {
  position: absolute;
  top: 53px;
  height: 1px;
  background: #b9e4c2;
}
.stem {
  position: absolute;
  top: 55px;
  bottom: 0;
  width: 3px;
  background: #b9e4c2;
}
.stem::before {
  content: "";
  position: absolute;
  top: -5px;
  left: -2px;
  width: 7px;
  height: 7px;
  background: #3f7a55;
  border: 1px solid #a3d8b0;
  border-radius: 50%;
}

/* Overlays */
.pointer {
  position: absolute;
  left: 71px;
  top: 61px;
  width: 370px;
  height: 270px;
}
.watermark {
  position: absolute;
  right: 60px;
  bottom: 27px;
  width: 240px;
  height: 110px;
  overflow: visible;
}
.wm-bai {
  font: bold 50px "Liberation Sans", sans-serif;
}
.wm-du {
  font: bold 30px "Liberation Sans", sans-serif;
  fill: #34444f;
}
.wm-cn {
  font: bold 39px "Noto Sans CJK SC", sans-serif;
}
.wm-url {
  font: 500 26px "Noto Sans", sans-serif;
}
```
FILE: script.js
```js
const ORIGIN = 43;      // x of the first bar line
const BAR = 892;
const STEPS = 16;
const ROW = 18;
const NAMES = ["B", "A#", "A", "G#", "G", "F#", "F", "E", "D#", "D", "C#", "C"];

const notes = [
  { key: "D#6", start: -1, len: 1 },
  { key: "E7", start: 0, len: 2 },
  { key: "F#6", start: 2, len: 2 },
  { key: "A6", start: 3, len: 2 },
  { key: "F#7", start: 4, len: 4 },
  { key: "F6", start: 8, len: 2 },
  { key: "D7", start: 11, len: 2 },
  { key: "B6", start: 11, len: 2 },
  { key: "G#6", start: 11, len: 2 },
  { key: "D#6", start: 11, len: 2 },
  { key: "B6", start: 14, len: 2 }
];
const levels = [[-1, 10], [11, 13], [14, 16]];

const x = step => Math.floor(ORIGIN + step * BAR / STEPS);

function add(parent, className, text) {
  const el = document.createElement("div");
  el.className = className;
  if (text) el.textContent = text;
  parent.appendChild(el);
  return el;
}

const keys = document.getElementById("keys");
const grid = document.getElementById("grid");
const velocity = document.getElementById("velocity");
const ruler = document.getElementById("ruler");

const rows = [];
[7, 6].forEach(octave => NAMES.forEach(name => rows.push(name + octave)));

rows.forEach(name => {
  let kind = "";
  if (name.includes("#")) kind += " black";
  if (/^[FC]\d/.test(name)) kind += " edge";
  add(grid, "lane" + kind);
  const root = /^C\d/.test(name);
  add(keys, "key" + kind + (root ? " root" : ""), root ? name : "");
});

// Vertical lines
for (let s = 0; s < STEPS * 3; s++) {
  const kind = s % 16 === 0 ? " bar-start" : s % 4 === 0 ? " beat" : "";
  add(grid, "line" + kind).style.left = x(s) + "px";
  add(velocity, "line" + kind).style.left = x(s) + "px";
}

for (let bar = 0; bar < 2; bar++) {
  const label = document.createElement("span");
  label.textContent = bar + 3;
  label.style.left = x(bar * STEPS) + "px";
  ruler.appendChild(label);
}

notes.forEach(n => {
  const left = Math.max(0, x(n.start));
  const el = add(grid, "note", n.key);
  el.style.left = left + "px";
  el.style.top = rows.indexOf(n.key) * ROW + "px";
  el.style.width = x(n.start + n.len) - left + "px";
});

levels.forEach(([from, to]) => {
  const el = add(velocity, "level");
  el.style.left = x(from) + "px";
  el.style.width = x(to) - x(from) + "px";
});

[...new Set(notes.map(n => n.start))].filter(s => s >= 0).forEach(s => {
  add(velocity, "stem").style.left = x(s) - 1 + "px";
});
```
